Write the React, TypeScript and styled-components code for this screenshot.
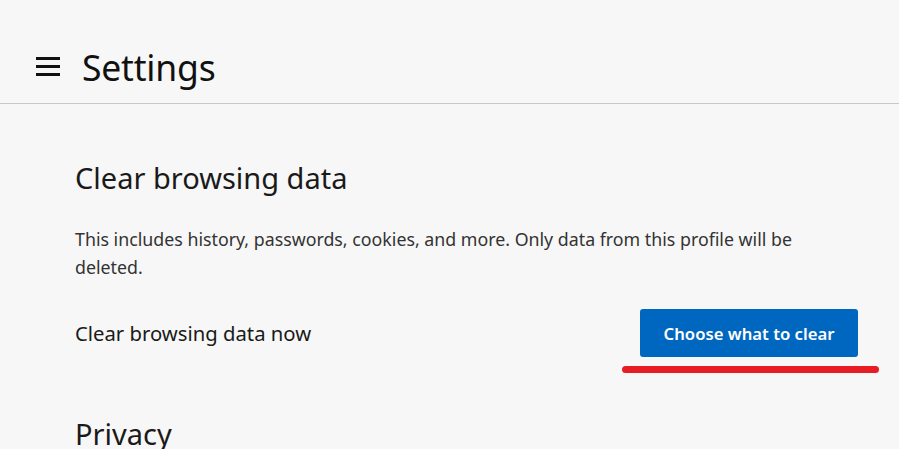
import React from "react";
import styled, { createGlobalStyle } from "styled-components";

const Global = createGlobalStyle`
  html, body { margin: 0; padding: 0; background: #f7f7f7; }
  body { font-family: "Segoe UI", "Noto Sans", "Open Sans", sans-serif; color: #1a1a1a; }
`;

const Page = styled.div`
  width: 899px;
  height: 449px;
  overflow: hidden;
  background: #f7f7f7;
`;

const Header = styled.header`
  height: 104px;
  border-bottom: 1px solid #c8c8c8;
  display: flex;
  align-items: center;
  gap: 22px;
  padding: 30px 0 0 36px;
  box-sizing: border-box;
`;

const Menu = styled.svg`
  width: 24px;
  height: 19px;
  flex-shrink: 0;
`;

const Title = styled.h1`
  margin: 0;
  font-size: 35.5px;
  font-weight: 400;
  line-height: 44px;
  color: #111;
  letter-spacing: -0.2px;
`;

const Content = styled.main`
  padding: 54px 41px 0 75px;
`;

const SectionTitle = styled.h2`
  margin: 0;
  font-size: 29px;
  font-weight: 400;
  line-height: 40px;
  color: #1a1a1a;
`;

const Desc = styled.p`
  margin: 27px 0 0;
  font-size: 17.8px;
  line-height: 28px;
  color: #333;
`;

const Row = styled.div`
  display: flex;
  align-items: center;
  justify-content: space-between;
  margin-top: 28px;
`;

const RowLabel = styled.span`
  font-size: 20.3px;
  font-weight: 400;
  color: #1a1a1a;
`;

const ButtonWrap = styled.div`
  position: relative;
`;

const PrimaryButton = styled.button`
  display: block;
  width: 218px;
  height: 48px;
  border: none;
  border-radius: 3px;
  background: #0067c0;
  color: #fff;
  font-family: inherit;
  font-size: 16.7px;
  font-weight: 600;
  cursor: pointer;
`;

const Annotation = styled.div`
  position: absolute;
  left: -18px;
  right: -21px;
  top: 57px;
  height: 7px;
  border-radius: 4px;
  background: #e81c23;
`;

const NextTitle = styled(SectionTitle)`
  margin-top: 57px;
`;

export default function App() {
  return (
    <Page>
      <Global />
      <Header>
        <Menu viewBox="0 0 24 19">
          <rect x="0" y="0" width="24" height="3" fill="#111" />
          <rect x="0" y="8" width="24" height="3" fill="#111" />
          <rect x="0" y="16" width="24" height="3" fill="#111" />
        </Menu>
        <Title>Settings</Title>
      </Header>
      <Content>
        <SectionTitle>Clear browsing data</SectionTitle>
        <Desc>
          This includes history, passwords, cookies, and more. Only data from this profile will be deleted.
        </Desc>
        <Row>
          <RowLabel>Clear browsing data now</RowLabel>
          <ButtonWrap>
            <PrimaryButton>Choose what to clear</PrimaryButton>
            <Annotation />
          </ButtonWrap>
        </Row>
        <NextTitle>Privacy</NextTitle>
      </Content>
    </Page>
  );
}
